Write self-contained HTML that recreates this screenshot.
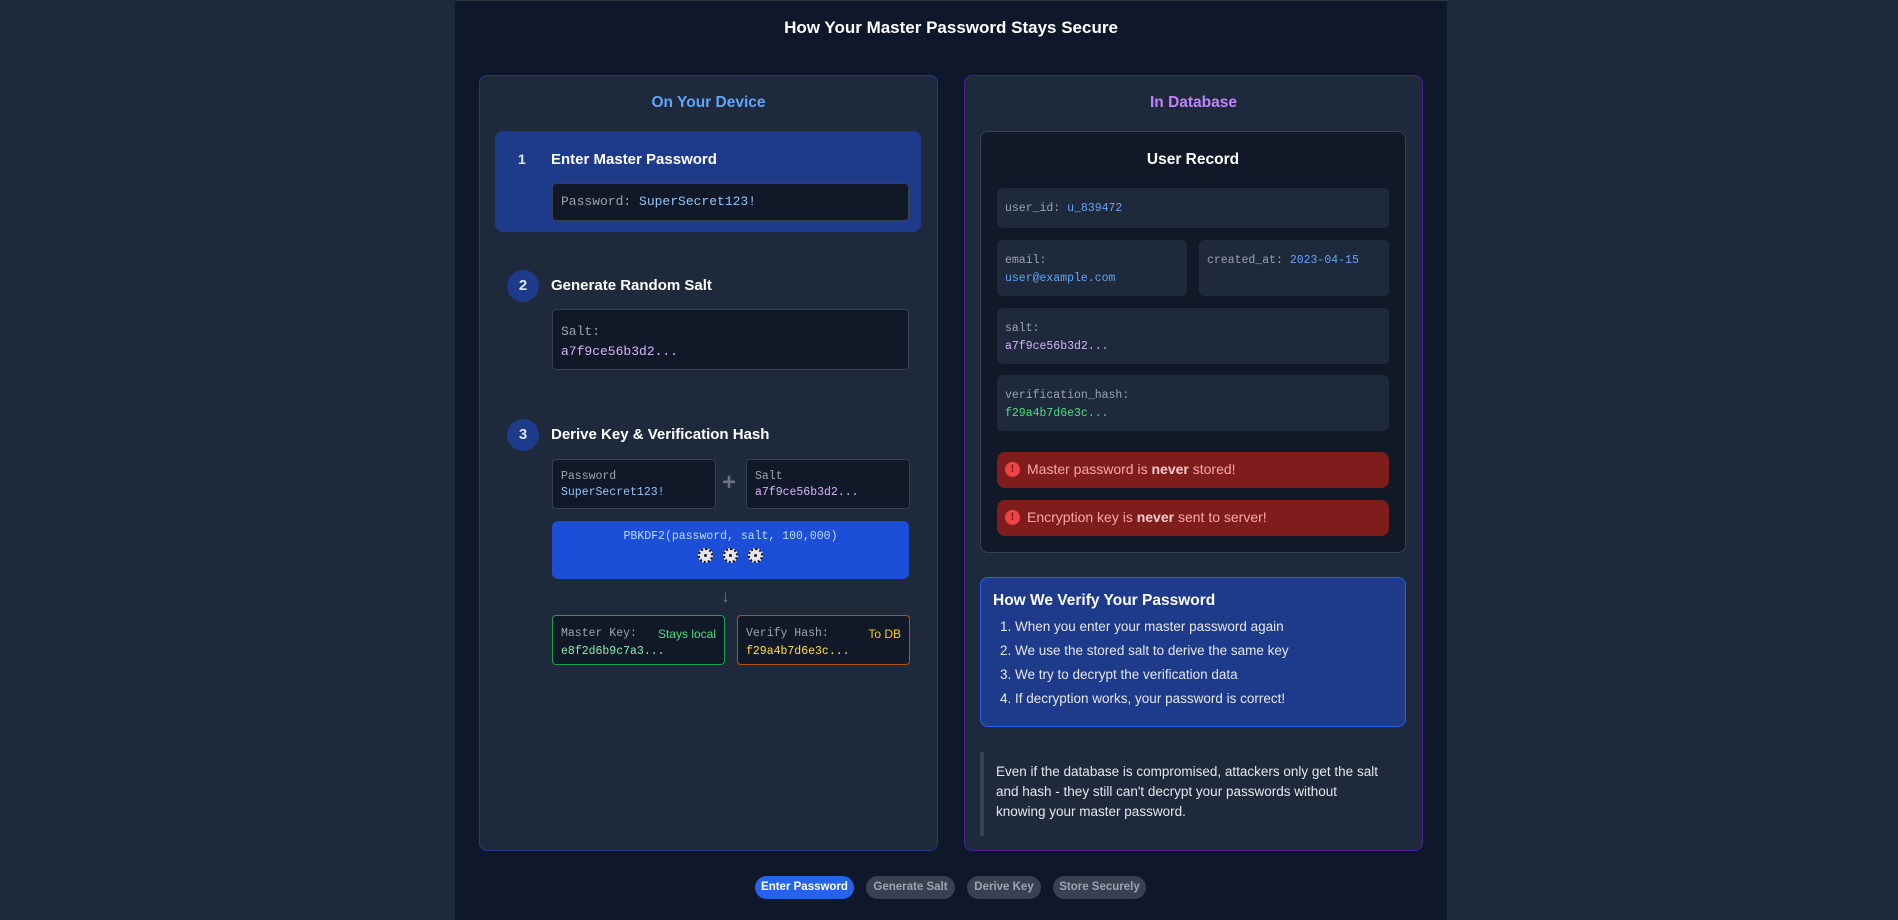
<!DOCTYPE html>
<html><head><meta charset="utf-8"><style>
*{box-sizing:border-box;margin:0;padding:0}
body{width:1898px;height:920px;background:#1e293b;font-family:"Liberation Sans",sans-serif;position:relative;overflow:hidden;color:#fff}
.a{position:absolute}
.mono{font-family:"Liberation Mono",monospace}
.main{left:455px;top:0;width:992px;height:920px;background:#0f172a;border-top:1px solid #2d3b3a}
.panel{background:#1e293b;border-radius:8px}
.box{background:#111827;border:1px solid #374151;border-radius:4px}
.st{font-size:15px;font-weight:bold;color:#fff}
.circ{width:32px;height:32px;border-radius:50%;background:#1e3a8a;color:#dbeafe;font-weight:bold;font-size:15px;text-align:center;line-height:32px}
.row{background:#1e293b;border-radius:5px;font-size:11.5px;color:#9ca3af;padding:0 8px}
.lbl{color:#9ca3af}
.red{background:#7f1d1d;border-radius:8px;color:#fca5a5;font-size:14px;line-height:35px;padding-left:30px}
.red i{position:absolute;left:8px;top:10px;width:15px;height:15px;border-radius:50%;background:#ef4444;color:#7f1d1d;font-style:normal;font-weight:bold;font-size:11px;line-height:15px;text-align:center}
.red b{color:#fecaca}
.pill{top:876px;height:23px;border-radius:12px;font-size:11.5px;font-weight:bold;text-align:center;line-height:23px;background:#374151;color:#9ca3af}
.gear{display:inline-block;width:15px;height:15px;border-radius:50%;background:#e5e7eb;border:2px dotted #111;margin:0 5px;position:relative}
.gear:after{content:"";position:absolute;left:4px;top:4px;width:3px;height:3px;background:#111;border-radius:50%}
</style></head><body>
<div class="a main"></div>
<div class="a" style="left:455px;top:18px;width:992px;text-align:center;font-size:17px;font-weight:bold">How Your Master Password Stays Secure</div>

<div class="a panel" style="left:479px;top:75px;width:459px;height:776px;border:1px solid #1e3a8a"></div>
<div class="a" style="left:479px;top:94px;width:459px;text-align:center;font-size:15.5px;font-weight:bold;color:#60a5fa">On Your Device</div>

<div class="a" style="left:495px;top:131px;width:426px;height:101px;background:#1e3a8a;border-radius:8px"></div>
<div class="a" style="left:518px;top:151px;font-size:14px;font-weight:bold;color:#dbeafe">1</div>
<div class="a st" style="left:551px;top:151px">Enter Master Password</div>
<div class="a box mono" style="left:552px;top:183px;width:357px;height:38px;font-size:13px;line-height:36px;padding-left:8px"><span class="lbl">Password: </span><span style="color:#93c5fd">SuperSecret123!</span></div>

<div class="a circ" style="left:507px;top:270px">2</div>
<div class="a st" style="left:551px;top:277px">Generate Random Salt</div>
<div class="a box mono" style="left:552px;top:309px;width:357px;height:61px;font-size:13px;padding:12px 8px;line-height:20px"><div class="lbl">Salt:</div><div style="color:#d8b4fe">a7f9ce56b3d2...</div></div>

<div class="a circ" style="left:507px;top:419px">3</div>
<div class="a st" style="left:551px;top:426px">Derive Key &amp; Verification Hash</div>
<div class="a box mono" style="left:552px;top:459px;width:164px;height:50px;font-size:11.5px;padding:9px 8px;line-height:16px"><div class="lbl">Password</div><div style="color:#93c5fd">SuperSecret123!</div></div>
<div class="a" style="left:722px;top:469px;font-size:24px;color:#6b7280;font-weight:bold">+</div>
<div class="a box mono" style="left:746px;top:459px;width:164px;height:50px;font-size:11.5px;padding:9px 8px;line-height:16px"><div class="lbl">Salt</div><div style="color:#d8b4fe">a7f9ce56b3d2...</div></div>
<div class="a" style="left:552px;top:521px;width:357px;height:58px;background:#1d4ed8;border-radius:6px;text-align:center"><div class="mono" style="font-size:11.5px;color:#bfdbfe;margin-top:9px">PBKDF2(password, salt, 100,000)</div><div style="margin-top:5px"><span class="gear"></span><span class="gear"></span><span class="gear"></span></div></div>
<div class="a" style="left:721px;top:586px;font-size:18px;color:#6b7280;font-weight:bold">&#8595;</div>
<div class="a box mono" style="left:552px;top:615px;width:173px;height:50px;border-color:#16a34a;font-size:11.5px;padding:9px 8px;line-height:18px"><div class="lbl">Master Key:<span style="float:right;color:#4ade80;font-family:'Liberation Sans',sans-serif;font-size:12px">Stays local</span></div><div style="color:#86efac">e8f2d6b9c7a3...</div></div>
<div class="a box mono" style="left:737px;top:615px;width:173px;height:50px;border-color:#b45309;font-size:11.5px;padding:9px 8px;line-height:18px"><div class="lbl">Verify Hash:<span style="float:right;color:#facc15;font-family:'Liberation Sans',sans-serif;font-size:12px">To DB</span></div><div style="color:#fde047">f29a4b7d6e3c...</div></div>

<div class="a panel" style="left:964px;top:75px;width:459px;height:776px;border:1px solid #4c1d95"></div>
<div class="a" style="left:964px;top:94px;width:459px;text-align:center;font-size:15.5px;font-weight:bold;color:#c084fc">In Database</div>
<div class="a box" style="left:980px;top:131px;width:426px;height:422px;border-radius:8px"></div>
<div class="a" style="left:980px;top:151px;width:426px;text-align:center;font-size:15.5px;font-weight:bold">User Record</div>
<div class="a row mono" style="left:997px;top:188px;width:392px;height:40px;line-height:42px">user_id: <span style="color:#60a5fa">u_839472</span></div>
<div class="a row mono" style="left:997px;top:240px;width:190px;height:56px;padding-top:12px;line-height:18px">email:<br><span style="color:#60a5fa">user@example.com</span></div>
<div class="a row mono" style="left:1199px;top:240px;width:190px;height:56px;padding-top:12px;line-height:18px">created_at: <span style="color:#60a5fa">2023-04-15</span></div>
<div class="a row mono" style="left:997px;top:308px;width:392px;height:56px;padding-top:12px;line-height:18px">salt:<br><span style="color:#d8b4fe">a7f9ce56b3d2...</span></div>
<div class="a row mono" style="left:997px;top:375px;width:392px;height:56px;padding-top:12px;line-height:18px">verification_hash:<br><span style="color:#4ade80">f29a4b7d6e3c...</span></div>
<div class="a red" style="left:997px;top:452px;width:392px;height:36px"><i>!</i>Master password is <b>never</b> stored!</div>
<div class="a red" style="left:997px;top:500px;width:392px;height:36px"><i>!</i>Encryption key is <b>never</b> sent to server!</div>

<div class="a" style="left:980px;top:577px;width:426px;height:150px;background:#1e3a8a;border:1px solid #2563eb;border-radius:8px;padding:14px 12px">
<div style="font-size:15.5px;font-weight:bold">How We Verify Your Password</div>
<div style="font-size:13.5px;line-height:24px;margin-top:5px;padding-left:7px;color:#e5e7eb">1. When you enter your master password again<br>2. We use the stored salt to derive the same key<br>3. We try to decrypt the verification data<br>4. If decryption works, your password is correct!</div>
</div>
<div class="a" style="left:980px;top:752px;width:424px;height:84px;border-left:4px solid #374151;padding:10px 0 0 12px;font-size:13.5px;line-height:20px;color:#e5e7eb">Even if the database is compromised, attackers only get the salt and hash - they still can't decrypt your passwords without<br>knowing your master password.</div>

<div class="a pill" style="left:755px;width:99px;background:#2563eb;color:#fff">Enter Password</div>
<div class="a pill" style="left:866px;width:89px">Generate Salt</div>
<div class="a pill" style="left:967px;width:74px">Derive Key</div>
<div class="a pill" style="left:1053px;width:93px">Store Securely</div>
</body></html>
